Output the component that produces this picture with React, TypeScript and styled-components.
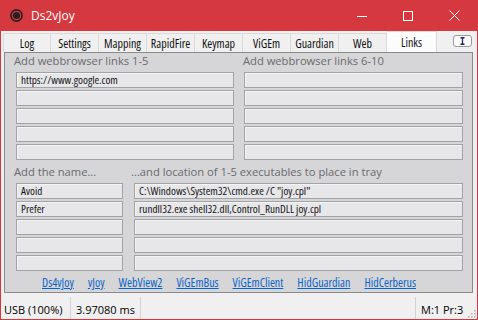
import React from 'react';
import styled, { createGlobalStyle } from 'styled-components';

const Global = createGlobalStyle`
  html, body { margin: 0; padding: 0; background: #ffffff; }
  * { box-sizing: border-box; }
`;

const RED = '#d5383e';
const NARROW = `font-family: "Open Sans", sans-serif; font-stretch: 75%;`;

const Window = styled.div`
  width: 478px;
  height: 320px;
  display: flex;
  flex-direction: column;
  background: ${RED};
  padding: 0 1px 1px 1px;
  overflow: hidden;
  font-family: "Open Sans", "Noto Sans", sans-serif;
`;

const TitleBar = styled.div`
  height: 31px;
  flex: none;
  display: flex;
  align-items: center;
  padding-left: 9px;
  color: #ffffff;
`;

const TitleText = styled.span`
  margin-left: 8px;
  font-size: 12px;
  flex: 1;
  line-height: 16px;
`;

const CtrlButton = styled.div`
  width: 46px;
  height: 31px;
  display: flex;
  align-items: center;
  justify-content: center;
`;

const Client = styled.div`
  flex: 1;
  display: flex;
  flex-direction: column;
  background: #f0f0f0;
`;

const TabRow = styled.div`
  height: 21px;
  flex: none;
  display: flex;
  align-items: flex-end;
  padding-left: 2px;
`;

const Tab = styled.div<{ $active?: boolean; $first?: boolean }>`
  width: ${p => (p.$active ? 50 : 48)}px;
  height: ${p => (p.$active ? 21 : 19)}px;
  display: flex;
  align-items: center;
  justify-content: center;
  background: ${p => (p.$active ? '#fcfcfc' : '#f0f0f0')};
  border: 1px solid #d9d9d9;
  border-bottom: none;
  border-left: ${p => (p.$first ? '1px solid #d9d9d9' : 'none')};
  ${NARROW}
  font-size: 12px;
  color: #111;
  padding-top: ${p => (p.$active ? 0 : 1)}px;
`;

const TabSpacer = styled.div`
  flex: 1;
`;

const InfoButton = styled.div`
  width: 19px;
  height: 12px;
  margin: 0 5px 5px 0;
  border: 1px solid #9a9a9a;
  border-radius: 3px;
  background: #fdfdfd;
  display: flex;
  align-items: center;
  justify-content: center;
`;

const Panel = styled.div`
  height: 241px;
  flex: none;
  margin: 0 4px 0 3px;
  border: 1px solid #8a8a8a;
  background: #d6d6d9;
  display: flex;
  flex-direction: column;
  padding: 1px 9px 0 11px;
`;

const Section = styled.div<{ $cols: string; $gap: number }>`
  display: grid;
  grid-template-columns: ${p => p.$cols};
  column-gap: ${p => p.$gap}px;
`;

const Column = styled.div`
  display: flex;
  flex-direction: column;
  gap: 2px;
`;

const Label = styled.div<{ $shift: number }>`
  font-size: 11.2px;
  line-height: 14px;
  color: #6a6a6a;
  margin-left: ${p => p.$shift}px;
  margin-bottom: 2px;
  white-space: nowrap;
`;

const Field = styled.div`
  height: 16px;
  background: #e7e7ea;
  border: 1px solid #a3a3a6;
  box-shadow: inset 1px 1px 0 #f4f4f6;
  padding-left: 4px;
  ${NARROW}
  font-size: 11.2px;
  line-height: 14px;
  color: #141414;
  white-space: nowrap;
  overflow: hidden;
`;

const Section2Gap = styled.div`
  height: 5px;
`;

const LinkRow = styled.div`
  display: flex;
  gap: 14px;
  margin-top: 5px;
  padding-left: 26px;
`;

const Link = styled.a`
  ${NARROW}
  font-size: 12px;
  line-height: 14px;
  color: #0a64c8;
  text-decoration: underline;
  cursor: pointer;
`;

const StatusBar = styled.div`
  flex: 1;
  display: flex;
  align-items: stretch;
  font-size: 11px;
  color: #000;
  position: relative;
`;

const StatusCell = styled.div<{ $w?: number; $sep?: boolean; $grow?: boolean; $pad?: number }>`
  ${p => (p.$w ? `width: ${p.$w}px;` : '')}
  ${p => (p.$grow ? 'flex: 1;' : '')}
  display: flex;
  align-items: center;
  padding: 3px 0 0 ${p => p.$pad ?? 3}px;
  margin-top: 4px;
  border-right: ${p => (p.$sep ? '1px solid #d3d3d3' : 'none')};
  white-space: nowrap;
`;

const Grip = styled.svg`
  position: absolute;
  right: 1px;
  bottom: 1px;
`;

const webLeft = ['https://www.google.com', '', '', '', ''];
const webRight = ['', '', '', '', ''];
const names = ['Avoid', 'Prefer', '', '', ''];
const paths = ['C:\\Windows\\System32\\cmd.exe /C "joy.cpl"', 'rundll32.exe shell32.dll,Control_RunDLL joy.cpl', '', '', ''];
const tabs = ['Log', 'Settings', 'Mapping', 'RapidFire', 'Keymap', 'ViGEm', 'Guardian', 'Web', 'Links'];
const links = ['Ds4vJoy', 'vJoy', 'WebView2', 'ViGEmBus', 'ViGEmClient', 'HidGuardian', 'HidCerberus'];

export default function App() {
  return (
    <>
      <Global />
      <Window>
        <TitleBar>
          <svg width="13" height="13" viewBox="0 0 13 13">
            <circle cx="6.5" cy="6.5" r="5.6" fill="none" stroke="#222" strokeWidth="1.6" />
            <circle cx="6.5" cy="6.5" r="3.6" fill="#2c1e20" />
          </svg>
          <TitleText>Ds2vJoy</TitleText>
          <CtrlButton>
            <svg width="10" height="10" viewBox="0 0 10 10">
              <line x1="0" y1="5.5" x2="10" y2="5.5" stroke="#fff" strokeWidth="1" />
            </svg>
          </CtrlButton>
          <CtrlButton>
            <svg width="10" height="10" viewBox="0 0 10 10">
              <rect x="0.5" y="0.5" width="9" height="9" fill="none" stroke="#fff" strokeWidth="1" />
            </svg>
          </CtrlButton>
          <CtrlButton>
            <svg width="11" height="11" viewBox="0 0 11 11">
              <path d="M0.5 0.5 L10.5 10.5 M10.5 0.5 L0.5 10.5" stroke="#fff" strokeWidth="1" />
            </svg>
          </CtrlButton>
        </TitleBar>
        <Client>
          <TabRow>
            {tabs.map((t, i) => (
              <Tab key={t} $active={t === 'Links'} $first={i === 0}>{t}</Tab>
            ))}
            <TabSpacer />
            <InfoButton>
              <svg width="7" height="8" viewBox="0 0 7 8">
                <path d="M1.5 0.75 H5.5 M3.5 0.75 V7.25 M1.5 7.25 H5.5" stroke="#1c2a55" strokeWidth="1.3" fill="none" />
              </svg>
            </InfoButton>
          </TabRow>
          <Panel>
            <Section $cols="218px 219px" $gap={10}>
              <Column>
                <Label $shift={-2}>Add webbrowser links 1-5</Label>
                {webLeft.map((v, i) => <Field key={i}>{v}</Field>)}
              </Column>
              <Column>
                <Label $shift={-1}>Add webbrowser links 6-10</Label>
                {webRight.map((v, i) => <Field key={i}>{v}</Field>)}
              </Column>
            </Section>
            <Section2Gap />
            <Section $cols="107px 329px" $gap={11}>
              <Column>
                <Label $shift={-2}>Add the name...</Label>
                {names.map((v, i) => <Field key={i}>{v}</Field>)}
              </Column>
              <Column>
                <Label $shift={-3}>...and location of 1-5 executables to place in tray</Label>
                {paths.map((v, i) => <Field key={i}>{v}</Field>)}
              </Column>
            </Section>
            <LinkRow>
              {links.map(l => <Link key={l}>{l}</Link>)}
            </LinkRow>
          </Panel>
          <StatusBar>
            <StatusCell $w={70} $sep>USB (100%)</StatusCell>
            <StatusCell $w={70} $sep $pad={5}>3.97080 ms</StatusCell>
            <StatusCell $grow $sep />
            <StatusCell $w={61} $pad={5}>M:1 Pr:3</StatusCell>
            <Grip width="10" height="10" viewBox="0 0 10 10">
              {[[8, 2], [8, 5], [5, 5], [8, 8], [5, 8], [2, 8]].map(([x, y], i) => (
                <rect key={i} x={x} y={y} width="1.5" height="1.5" fill="#b0b0b0" />
              ))}
            </Grip>
          </StatusBar>
        </Client>
      </Window>
    </>
  );
}
